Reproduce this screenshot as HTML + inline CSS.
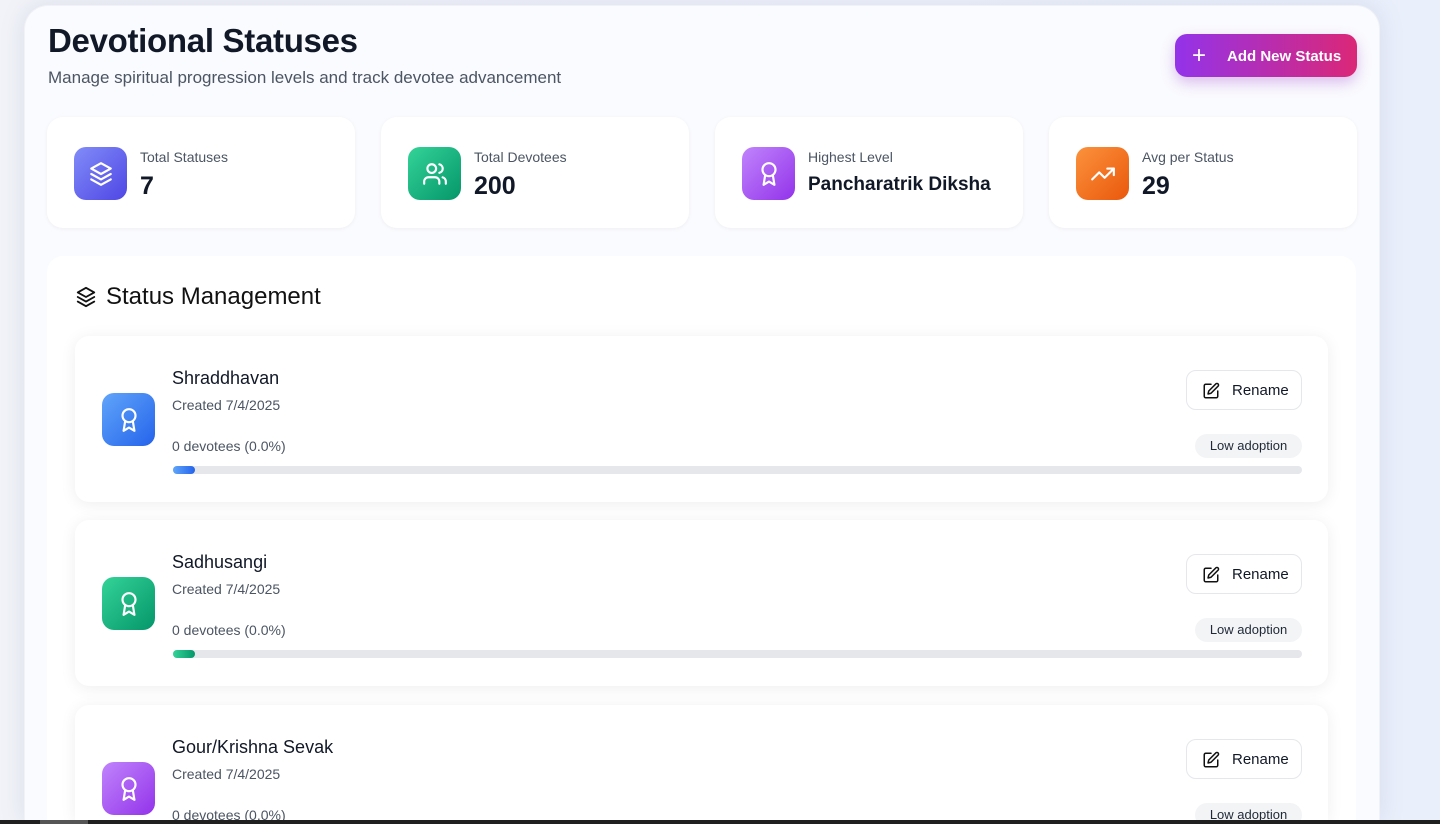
<!DOCTYPE html>
<html><head><meta charset="utf-8"><style>
*{box-sizing:border-box;margin:0;padding:0}
html,body{width:1440px;height:824px;overflow:hidden}
body{font-family:"Liberation Sans",sans-serif;color:#111827}
#root{position:relative;width:1440px;height:824px;overflow:hidden;background:linear-gradient(90deg,#f1f3f8 0%,#eef2fb 60%,#e9effb 100%)}
.panel{position:absolute;left:24px;top:5px;width:1356px;height:815px;background:#fafbfe;border-radius:24px 24px 0 0;box-shadow:0 0 24px rgba(120,130,170,.18);border:1px solid #f0f2f7;border-bottom:none}
.abs{position:absolute}
h1{position:absolute;left:48px;top:22px;font-size:33px;font-weight:700;color:#111827;letter-spacing:-.3px}
.sub{position:absolute;left:48px;top:68px;font-size:17px;color:#4b5563}
.btn{position:absolute;left:1175px;top:34px;width:182px;height:43px;border-radius:12px;background:linear-gradient(90deg,#9333ea,#db2777);color:#fff;font-weight:700;font-size:15px;box-shadow:0 6px 14px rgba(150,50,200,.3)}
.btn span.p{position:absolute;left:17px;top:10px;font-size:24px;font-weight:300;line-height:24px}
.btn span.t{position:absolute;left:52px;top:14px}
.stat{position:absolute;top:117px;width:308px;height:111px;background:#fff;border-radius:16px;box-shadow:0 1px 4px rgba(0,0,0,.05)}
.ic{position:absolute;width:53px;height:53px;border-radius:12px;display:flex;align-items:center;justify-content:center}
.stat .ic{left:27px;top:30px}
.lbl{position:absolute;left:93px;top:32px;font-size:14px;color:#4b5563}
.val{position:absolute;left:93px;top:55px;font-size:25px;font-weight:700}
.sec{position:absolute;left:47px;top:256px;width:1309px;height:564px;background:#fff;border-radius:16px 16px 0 0}
.sh{position:absolute;left:106px;top:283px;font-size:24px;color:#111}
.item{position:absolute;left:75px;width:1253px;height:166px;background:#fff;border-radius:14px;box-shadow:0 2px 16px rgba(0,0,0,.07)}
.item .ic{left:27px;top:57px}
.nm{position:absolute;left:97px;top:32px;font-size:18px;color:#111827}
.cr{position:absolute;left:97px;top:61px;font-size:14px;color:#4b5563}
.dv{position:absolute;left:97px;top:102px;font-size:14px;color:#4b5563}
.bar{position:absolute;left:98px;top:130px;width:1129px;height:8px;border-radius:4px;background:#e5e7eb}
.bar i{position:absolute;left:0;top:0;width:22px;height:8px;border-radius:4px}
.rn{position:absolute;left:1111px;top:34px;width:116px;height:40px;border:1px solid #e5e7eb;border-radius:10px;background:#fff;font-size:15px}
.rn svg{position:absolute;left:15px;top:11px}
.rn span{position:absolute;left:45px;top:11px}
.pill{position:absolute;left:1120px;top:98px;width:107px;height:24px;border-radius:12px;background:#f3f4f6;font-size:13px;color:#1f2937;text-align:center;line-height:24px}
.sb{position:absolute;left:0;top:820px;width:1440px;height:4px;background:#1f1f1f}
</style></head><body><div id="root">
<div class="panel"></div>
<h1>Devotional Statuses</h1>
<div class="sub">Manage spiritual progression levels and track devotee advancement</div>
<div class="btn"><span class="p">+</span><span class="t">Add New Status</span></div>

<div class="stat" style="left:47px"><div class="ic" style="background:linear-gradient(135deg,#818cf8,#4f46e5)"><svg width="26" height="26" viewBox="0 0 24 24" fill="none" stroke="#fff" stroke-width="2" stroke-linecap="round" stroke-linejoin="round"><path d="M12 2 3 7l9 5 9-5-9-5z"/><path d="m3 12 9 5 9-5"/><path d="m3 17 9 5 9-5"/></svg></div><div class="lbl">Total Statuses</div><div class="val">7</div></div>
<div class="stat" style="left:381px"><div class="ic" style="background:linear-gradient(135deg,#34d399,#059669)"><svg width="26" height="26" viewBox="0 0 24 24" fill="none" stroke="#fff" stroke-width="2" stroke-linecap="round" stroke-linejoin="round"><path d="M16 21v-2a4 4 0 0 0-4-4H6a4 4 0 0 0-4 4v2"/><circle cx="9" cy="7" r="4"/><path d="M22 21v-2a4 4 0 0 0-3-3.9"/><path d="M16 3.1a4 4 0 0 1 0 7.8"/></svg></div><div class="lbl">Total Devotees</div><div class="val">200</div></div>
<div class="stat" style="left:715px"><div class="ic" style="background:linear-gradient(135deg,#c084fc,#9333ea)"><svg width="26" height="26" viewBox="0 0 24 24" fill="none" stroke="#fff" stroke-width="2" stroke-linecap="round" stroke-linejoin="round"><circle cx="12" cy="8" r="6"/><path d="M15.5 12.9 17 22l-5-3-5 3 1.5-9.1"/></svg></div><div class="lbl">Highest Level</div><div class="val" style="font-size:19px;top:57px">Pancharatrik Diksha</div></div>
<div class="stat" style="left:1049px"><div class="ic" style="background:linear-gradient(135deg,#fb923c,#ea580c)"><svg width="26" height="26" viewBox="0 0 24 24" fill="none" stroke="#fff" stroke-width="2" stroke-linecap="round" stroke-linejoin="round"><path d="m22 7-8.5 8.5-5-5L2 17"/><path d="M16 7h6v6"/></svg></div><div class="lbl">Avg per Status</div><div class="val">29</div></div>

<div class="sec"></div>
<svg class="abs" style="left:75px;top:286px" width="22" height="22" viewBox="0 0 24 24" fill="none" stroke="#111" stroke-width="2" stroke-linecap="round" stroke-linejoin="round"><path d="M12 2 3 7l9 5 9-5-9-5z"/><path d="m3 12 9 5 9-5"/><path d="m3 17 9 5 9-5"/></svg>
<div class="sh">Status Management</div>

<div class="item" style="top:336px"><div class="ic" style="background:linear-gradient(135deg,#60a5fa,#2563eb)"><svg width="26" height="26" viewBox="0 0 24 24" fill="none" stroke="#fff" stroke-width="2" stroke-linecap="round" stroke-linejoin="round"><circle cx="12" cy="8" r="6"/><path d="M15.5 12.9 17 22l-5-3-5 3 1.5-9.1"/></svg></div><div class="nm">Shraddhavan</div><div class="cr">Created 7/4/2025</div><div class="dv">0 devotees (0.0%)</div><div class="bar"><i style="background:linear-gradient(90deg,#60a5fa,#2563eb)"></i></div><div class="rn"><svg width="18" height="18" viewBox="0 0 24 24" fill="none" stroke="#111" stroke-width="2" stroke-linecap="round" stroke-linejoin="round"><path d="M12 3H5a2 2 0 0 0-2 2v14a2 2 0 0 0 2 2h14a2 2 0 0 0 2-2v-7"/><path d="M18.4 2.6a2.1 2.1 0 0 1 3 3L12 15l-4 1 1-4z"/></svg><span>Rename</span></div><div class="pill">Low adoption</div></div>

<div class="item" style="top:520px"><div class="ic" style="background:linear-gradient(135deg,#34d399,#059669)"><svg width="26" height="26" viewBox="0 0 24 24" fill="none" stroke="#fff" stroke-width="2" stroke-linecap="round" stroke-linejoin="round"><circle cx="12" cy="8" r="6"/><path d="M15.5 12.9 17 22l-5-3-5 3 1.5-9.1"/></svg></div><div class="nm">Sadhusangi</div><div class="cr">Created 7/4/2025</div><div class="dv">0 devotees (0.0%)</div><div class="bar"><i style="background:linear-gradient(90deg,#34d399,#059669)"></i></div><div class="rn"><svg width="18" height="18" viewBox="0 0 24 24" fill="none" stroke="#111" stroke-width="2" stroke-linecap="round" stroke-linejoin="round"><path d="M12 3H5a2 2 0 0 0-2 2v14a2 2 0 0 0 2 2h14a2 2 0 0 0 2-2v-7"/><path d="M18.4 2.6a2.1 2.1 0 0 1 3 3L12 15l-4 1 1-4z"/></svg><span>Rename</span></div><div class="pill">Low adoption</div></div>

<div class="item" style="top:705px;height:115px;overflow:hidden;border-radius:14px 14px 0 0"><div class="ic" style="background:linear-gradient(135deg,#c084fc,#9333ea)"><svg width="26" height="26" viewBox="0 0 24 24" fill="none" stroke="#fff" stroke-width="2" stroke-linecap="round" stroke-linejoin="round"><circle cx="12" cy="8" r="6"/><path d="M15.5 12.9 17 22l-5-3-5 3 1.5-9.1"/></svg></div><div class="nm">Gour/Krishna Sevak</div><div class="cr">Created 7/4/2025</div><div class="dv">0 devotees (0.0%)</div><div class="rn"><svg width="18" height="18" viewBox="0 0 24 24" fill="none" stroke="#111" stroke-width="2" stroke-linecap="round" stroke-linejoin="round"><path d="M12 3H5a2 2 0 0 0-2 2v14a2 2 0 0 0 2 2h14a2 2 0 0 0 2-2v-7"/><path d="M18.4 2.6a2.1 2.1 0 0 1 3 3L12 15l-4 1 1-4z"/></svg><span>Rename</span></div><div class="pill">Low adoption</div></div>

<div class="sb"></div>
<div class="abs" style="left:40px;top:820px;width:48px;height:4px;background:#555"></div>
</div></body></html>
